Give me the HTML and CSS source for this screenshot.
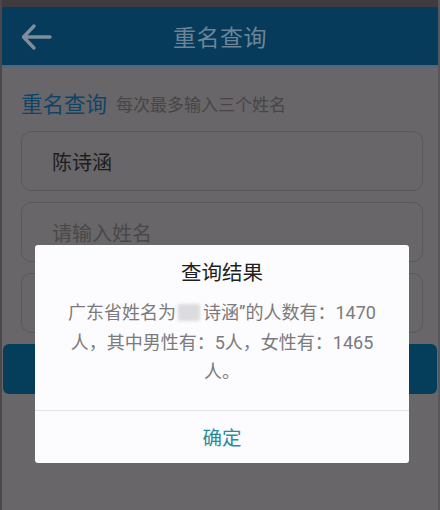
FILE: index.html
```html
<!DOCTYPE html>
<html lang="zh-CN">
<head>
<meta charset="utf-8">
<title>重名查询</title>
<link rel="stylesheet" href="styles.css">
</head>
<body>
<div class="screen">
  <div class="statusbar"></div>
  <header class="appbar">
    <svg class="back" width="32" height="28" viewBox="0 0 32 28" aria-hidden="true">
      <path d="M30 14 H4 M14 3 L3.5 14 L14 25" fill="none" stroke="#7f8e9a" stroke-width="3.4" stroke-linecap="round" stroke-linejoin="round"/>
    </svg>
    <h1 class="appbar-title">重名查询</h1>
  </header>
  <main class="content">
    <div class="section-head">
      <span class="section-title">重名查询</span>
      <span class="section-sub">每次最多输入三个姓名</span>
    </div>
    <div class="field filled">陈诗涵</div>
    <div class="field">请输入姓名</div>
    <div class="field"></div>
  </main>
  <div class="query-btn"></div>

  <div class="dialog">
    <div class="dialog-title">查询结果</div>
    <div class="dialog-msg">广东省姓名为<span class="blur"></span>诗涵”的人数有：1470<br>人，其中男性有：5人，女性有：1465<br>人。</div>
    <div class="dialog-action">确定</div>
  </div>
</div>
</body>
</html>
```
FILE: styles.css
```css
html, body {
  margin: 0;
  padding: 0;
}
body {
  width: 440px;
  height: 510px;
  overflow: hidden;
  background: #676567;
  font-family: Roboto, "Noto Sans CJK SC", sans-serif;
}
.screen {
  position: relative;
  width: 440px;
  height: 510px;
  background: #686668;
  border-left: 2px solid #4b484b;
  border-right: 2px solid #5a575a;
  box-sizing: border-box;
  display: flex;
  flex-direction: column;
}
.statusbar {
  height: 7px;
  background: #3f3c3f;
}
.appbar {
  height: 58px;
  background: #063b5b;
  border-bottom: 2px solid #50687a;
  display: flex;
  align-items: center;
  justify-content: center;
  position: relative;
  box-sizing: content-box;
}
.back {
  position: absolute;
  left: 18px;
  top: 16px;
}
.appbar-title {
  margin: 0;
  font-size: 23px;
  font-weight: 400;
  color: #6b8597;
  letter-spacing: 0.5px;
}
.content {
  padding: 24px 15px 0 19px;
  display: flex;
  flex-direction: column;
  gap: 11px;
}
.section-head {
  height: 28px;
  display: flex;
  align-items: center;
  gap: 9px;
  margin-bottom: 1px;
}
.section-title {
  font-size: 21.5px;
  color: #0e4468;
  line-height: 28px;
}
.section-sub {
  font-size: 17px;
  color: #474547;
  line-height: 28px;
}
.field {
  height: 60px;
  box-sizing: border-box;
  border: 1.5px solid #5a585a;
  border-radius: 10px;
  padding-left: 30px;
  display: flex;
  align-items: center;
  font-size: 20px;
  color: #4a484a;
}
.field.filled {
  color: #1e1d1e;
}
.query-btn {
  margin: 11px 1px 0 1px;
  height: 50px;
  border-radius: 6px;
  background: #053e5b;
}
.dialog {
  position: absolute;
  left: 33px;
  top: 245px;
  width: 374px;
  height: 218px;
  background: #fcfbfd;
  border-radius: 3px;
  display: flex;
  flex-direction: column;
  box-sizing: border-box;
  padding-top: 14px;
}
.dialog-title {
  text-align: center;
  font-size: 20.5px;
  line-height: 28px;
  color: #1f1f1f;
}
.dialog-msg {
  margin-top: 11px;
  text-align: center;
  font-size: 18px;
  line-height: 29.5px;
  color: #7b7a7c;
  padding-bottom: 23px;
  border-bottom: 1px solid #e3e2e4;
}
.blur {
  display: inline-block;
  width: 22px;
  height: 17px;
  margin: 0 3px 0 2px;
  vertical-align: -2px;
  background: #dcdbdd;
  border-radius: 2px;
  filter: blur(1.5px);
}
.dialog-action {
  flex: 1;
  display: flex;
  align-items: center;
  justify-content: center;
  font-size: 19.5px;
  color: #2c8b98;
}
```
